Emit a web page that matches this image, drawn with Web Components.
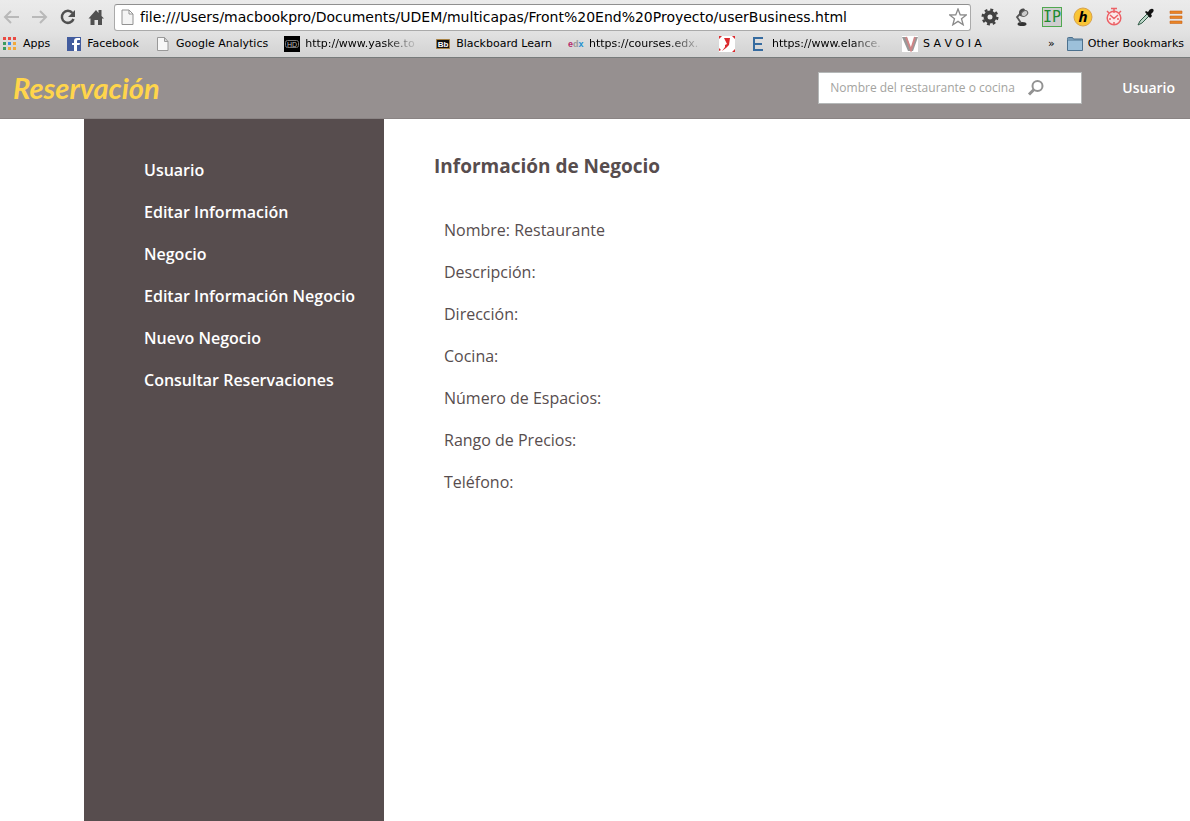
<!DOCTYPE html>
<html lang="es">
<head>
<meta charset="utf-8">
<title>Reservación</title>
<style>
html, body { height: 100%; }
body { margin: 0; background: #fff; font-family: "Open Sans", "Noto Sans", sans-serif; }
</style>
</head>
<body>
<reservation-app></reservation-app>

<template id="app-tpl">
<style>
:host { display: flex; flex-direction: column; min-height: 100vh; }
.columns { flex: 1; display: flex; width: 100%; max-width: 1022px; margin: 0 auto; }
side-menu { flex: 0 0 300px; }
business-info { flex: 1; }
</style>
<browser-toolbar></browser-toolbar>
<bookmarks-bar></bookmarks-bar>
<site-header></site-header>
<div class="columns">
  <side-menu>
    <menu-link>Usuario</menu-link>
    <menu-link>Editar Información</menu-link>
    <menu-link>Negocio</menu-link>
    <menu-link>Editar Información Negocio</menu-link>
    <menu-link>Nuevo Negocio</menu-link>
    <menu-link>Consultar Reservaciones</menu-link>
  </side-menu>
  <business-info>
    <span slot="title">Información de Negocio</span>
    <info-row>Nombre: Restaurante</info-row>
    <info-row>Descripción:</info-row>
    <info-row>Dirección:</info-row>
    <info-row>Cocina:</info-row>
    <info-row>Número de Espacios:</info-row>
    <info-row>Rango de Precios:</info-row>
    <info-row>Teléfono:</info-row>
  </business-info>
</div>
</template>

<template id="toolbar-tpl">
<style>
:host { display: flex; align-items: center; height: 32px; box-sizing: border-box; padding: 2px 4px 0 2px; background: linear-gradient(#ebebeb, #e2e2e2); }
button { flex: none; border: 0; padding: 0; background: none; display: grid; place-items: center; width: 20px; height: 20px; }
svg { display: block; }
.nav { display: flex; gap: 8px; margin-right: 8px; }
.url { flex: 1; min-width: 0; display: flex; align-items: center; height: 27px; box-sizing: border-box; padding: 0 3px 0 6px; gap: 6px; background: #fff; border: 1px solid #aaa; border-top-color: #909090; border-radius: 3px; }
input { flex: 1; min-width: 0; border: 0; outline: 0; padding: 0; background: none; color: #000; font: 14px/20px "DejaVu Sans", "Noto Sans", sans-serif; }
.ext { display: flex; gap: 11px; margin-left: 9px; }
.ip { font: 15px "DejaVu Sans Mono", monospace; }
.h { font: italic bold 15px "Open Sans", sans-serif; }
</style>
<div class="nav">
  <button aria-label="Back"><svg width="20" height="20" fill="none" stroke="#b9b9b9" stroke-width="2"><path d="M17 10H3M9 4 3 10l6 6"/></svg></button>
  <button aria-label="Forward"><svg width="20" height="20" fill="none" stroke="#b9b9b9" stroke-width="2"><path d="M2 10h14M10 4l6 6-6 6"/></svg></button>
  <button aria-label="Reload"><svg width="20" height="20" fill="none"><path d="M14.500 6A6 6 0 1 0 15.500 12" stroke="#505050" stroke-width="2.500"/><path d="M17 3v7h-7z" fill="#505050"/></svg></button>
  <button aria-label="Home"><svg width="20" height="20" fill="#505050"><path d="M2.500 11.500 10 3l2.500 3V3h3v6l2.500 2.500h-2V18h-4v-5H8.500v5h-4v-6.500z"/></svg></button>
</div>
<div class="url">
  <svg width="13" height="16" fill="#f4f4f4" stroke="#929292"><path d="M1 1h7l4 4v10.500H1zM8 1v4h4"/></svg>
  <input aria-label="Address" value="file:///Users/macbookpro/Documents/UDEM/multicapas/Front%20End%20Proyecto/userBusiness.html">
  <svg width="18" height="18" fill="#fff" stroke="#8a8a8a" stroke-width="1.300"><path d="m9 1 2.200 5.800 6.200.2-4.900 3.800 1.700 6L9 13.400l-5.200 3.400 1.700-6L.6 7l6.200-.2z"/></svg>
</div>
<div class="ext">
  <button aria-label="Settings"><svg width="20" height="20"><circle cx="10" cy="10" r="4.500" fill="none" stroke="#414141" stroke-width="4"/><circle cx="10" cy="10" r="7.300" fill="none" stroke="#414141" stroke-width="2.400" stroke-dasharray="2.870 2.870"/></svg></button>
  <button aria-label="Desk lamp"><svg width="20" height="20" fill="none"><ellipse cx="11" cy="17" rx="4.500" ry="2" fill="#333"/><path d="M10 16 6 10l4-4" stroke="#555" stroke-width="1.800"/><path d="M8 5q1-4 5-3.500l4 5-6 3q-3 0-3-4.500z" fill="#4a4a4a"/><ellipse cx="13.500" cy="6.500" rx="3.500" ry="2.500" transform="rotate(-35 13.500 6.500)" fill="#ccc" stroke="#666"/></svg></button>
  <button aria-label="IP"><svg width="20" height="20"><rect x=".5" y=".5" width="19" height="19" fill="#cfcdcf" stroke="#50a850"/><text class="ip" x="10" y="15" text-anchor="middle" fill="#208a30">IP</text></svg></button>
  <button aria-label="Highlighter"><svg width="20" height="20"><circle cx="10" cy="10" r="9" fill="#f9c536" stroke="#d8a24c"/><text class="h" x="10" y="15" text-anchor="middle">h</text></svg></button>
  <button aria-label="Timer"><svg width="20" height="20" fill="none" stroke="#ec6166" stroke-width="1.500"><circle cx="10" cy="11" r="6.800" fill="#fae9e9"/><path d="M7 1.500h6M10 2v4M3 4 5 6M17 4l-2 2M6 8l4 3.500 4-3.500M10 15v2M5 12h2M13 12h2"/></svg></button>
  <button aria-label="Colour picker"><svg width="20" height="20"><path d="M12 7 5 14l-2 4 4-2 7-7" fill="#bcd6c8" stroke="#315b47"/><path d="m10 5 1-1 2 1q2-4 5-3 2 2-2 5l1 2-2 2z" fill="#111"/></svg></button>
  <button aria-label="Menu"><svg width="20" height="20" fill="#e98425" stroke="#c9661c" stroke-width=".6"><path d="M4 4h12v2.500H4zM4 9h12v2.500H4zM4 14h12v2.500H4z"/></svg></button>
</div>
</template>

<template id="bookmarks-tpl">
<style>
:host { display: flex; align-items: center; height: 26px; box-sizing: border-box; padding: 0 6px 1px 2px; gap: 16px; background: linear-gradient(#e2e2e2, #d2d2d2); border-bottom: 1px solid #777b7b; }
svg { display: block; flex: none; }
.push { margin-left: auto; }
button { border: 0; padding: 0; background: none; font: 11px/16px "DejaVu Sans", "Noto Sans", sans-serif; margin-right: -4px; }
.hd { font: 7px "Liberation Sans", sans-serif; }
.bb { font: bold 8px "Liberation Sans", sans-serif; }
.ex { font: bold 9px "Liberation Sans", sans-serif; }
</style>
<book-mark><svg slot="icon" width="16" height="16"><path fill="#ea4a42" d="M1 1h3v3H1zM6 1h3v3H6zM11 1h3v3h-3z"/><path fill="#3a9c60" d="M1 6h3v3H1zM1 11h3v3H1z"/><path fill="#3b8ce8" d="M6 6h3v3H6z"/><path fill="#f2a93c" d="M11 6h3v3h-3zM6 11h3v3H6zM11 11h3v3h-3z"/></svg>Apps</book-mark>
<book-mark><svg slot="icon" width="16" height="16"><path fill="#425c9e" d="M1 1h14v14H1z"/><path fill="#fff" d="M8 15V9H6V7h2V5q0-3 3-3h3v2h-2q-1 0-1 1v2h3l-.5 2H11v6z"/></svg>Facebook</book-mark>
<book-mark><svg slot="icon" width="16" height="16" fill="#f7f7f7" stroke="#999"><path d="M2.500 1.500h7l3.500 4v9H2.500zM9.500 1.500v4H13"/></svg>Google Analytics</book-mark>
<book-mark class="clip"><svg slot="icon" width="16" height="16"><path d="M0 0h16v16H0z"/><rect x="1.500" y="4.500" width="13" height="7" rx="2" fill="none" stroke="#777"/><text class="hd" x="8" y="11" text-anchor="middle" fill="#bbb">HD</text></svg>http://www.yaske.to</book-mark>
<book-mark><svg slot="icon" width="16" height="16"><path fill="#111" stroke="#a68042" d="M1.500 3.500h13v9h-13z"/><text class="bb" x="8" y="11" text-anchor="middle" fill="#fff">Bb</text></svg>Blackboard Learn</book-mark>
<book-mark class="clip"><svg slot="icon" width="16" height="16"><text class="ex" x="0" y="11"><tspan fill="#b52a6b">e</tspan><tspan fill="#999">d</tspan><tspan fill="#1b8fd0">x</tspan></text></svg>https://courses.edx.</book-mark>
<book-mark class="bare"><svg slot="icon" width="16" height="16"><path fill="#fff" d="M0 0h16v16H0z"/><path fill="#dc2b2e" d="M5 2h6l-1 7-3 3-4 3 3-4V9l2-1zM0 0h3L0 3zM13 0h3v3zM16 13v3h-3zM0 12l2 2-2 1z"/></svg></book-mark>
<book-mark class="clip"><svg slot="icon" width="16" height="16"><path fill="#356ba0" d="M2 1h10v2H4v4h7v2H4v4h8v2H2z"/></svg>https://www.elance.</book-mark>
<book-mark><svg slot="icon" width="16" height="16"><path fill="#fff" d="M0 0h16v16H0z"/><path fill="#999" d="M0 1h5l4 14H6zM16 1h-3L9 15h2z"/><path d="m4 1 5 13 4-13" fill="none" stroke="#cf8586" stroke-width="2"/></svg>S A V O I A</book-mark>
<button class="push" aria-label="More bookmarks">»</button>
<book-mark><svg slot="icon" width="16" height="16"><path fill="#769ab5" stroke="#4c718e" d="M.5 3.500V2.500q0-1 1-1h4l1 1.500h9v11.500H.5z"/><path fill="#9cc0da" d="M1 5h14v9H1z"/></svg>Other Bookmarks</book-mark>
</template>

<template id="bookmark-tpl">
<style>
:host { display: block; flex: none; }
a { display: flex; align-items: center; gap: 5px; color: #000; text-decoration: none; font: 11px/16px "DejaVu Sans", "Noto Sans", sans-serif; white-space: nowrap; }
:host(.bare) a { gap: 0; }
:host(.clip) .label { width: 114px; -webkit-mask-image: linear-gradient(90deg, #000 70%, transparent); mask-image: linear-gradient(90deg, #000 70%, transparent); }
</style>
<a href="#"><slot name="icon"></slot><span class="label"><slot></slot></span></a>
</template>

<template id="header-tpl">
<style>
:host { display: flex; align-items: center; height: 61px; box-sizing: border-box; padding: 0 15px 0 13px; background: #969090; border-bottom: 1px solid #8a8484; }
.logo { color: #ffd54b; text-decoration: none; font: italic bold 29px/40px Lato, sans-serif; }
form { margin: 0 40px 0 auto; display: flex; align-items: center; width: 264px; height: 32px; box-sizing: border-box; padding: 0 11px; background: #fff; border: 1px solid #b5b8b8; }
input { width: 190px; border: 0; padding: 0; outline: 0; background: none; font: 12px/18px "Open Sans", sans-serif; color: #555; }
input::placeholder { color: #a3a3a0; opacity: 1; }
button { border: 0; padding: 0; margin-left: 7px; background: none; }
svg { display: block; }
.user { color: #fff; text-decoration: none; font: 600 14px/20px "Open Sans", sans-serif; }
</style>
<a class="logo" href="#">Reservación</a>
<form><input aria-label="Buscar" placeholder="Nombre del restaurante o cocina"><button type="button" aria-label="Buscar"><svg width="18" height="18" fill="none" stroke="#929292"><circle cx="10.500" cy="7" r="5" stroke-width="2"/><path d="m7 10.500-5 5" stroke-width="3"/></svg></button></form>
<a class="user" href="#">Usuario</a>
</template>

<template id="menu-tpl">
<style>
:host { display: block; background: #574d4e; }
nav { display: flex; flex-direction: column; gap: 20px; padding: 40px 0 40px 60px; }
</style>
<nav><slot></slot></nav>
</template>

<template id="link-tpl">
<style>
:host { display: block; }
a { color: #fff; text-decoration: none; font: 600 16px/22px "Open Sans", sans-serif; white-space: nowrap; }
</style>
<a href="#"><slot></slot></a>
</template>

<template id="info-tpl">
<style>
:host { display: block; box-sizing: border-box; padding: 32px 50px; color: #574d4e; }
h1 { margin: 0 0 38px; font: bold 19px/30px "Open Sans", sans-serif; }
.rows { display: flex; flex-direction: column; gap: 20px; padding-left: 10px; }
</style>
<h1><slot name="title"></slot></h1>
<div class="rows"><slot></slot></div>
</template>

<template id="row-tpl">
<style>
:host { display: block; font: 16px/22px "Open Sans", sans-serif; }
</style>
<slot></slot>
</template>

<script>
const define = (name, id) => customElements.define(name, class extends HTMLElement {
  constructor() {
    super();
    this.attachShadow({ mode: "open" }).append(document.getElementById(id).content.cloneNode(true));
  }
});
define("menu-link", "link-tpl");
define("info-row", "row-tpl");
define("book-mark", "bookmark-tpl");
define("browser-toolbar", "toolbar-tpl");
define("bookmarks-bar", "bookmarks-tpl");
define("site-header", "header-tpl");
define("side-menu", "menu-tpl");
define("business-info", "info-tpl");
define("reservation-app", "app-tpl");
</script>
</body>
</html>
